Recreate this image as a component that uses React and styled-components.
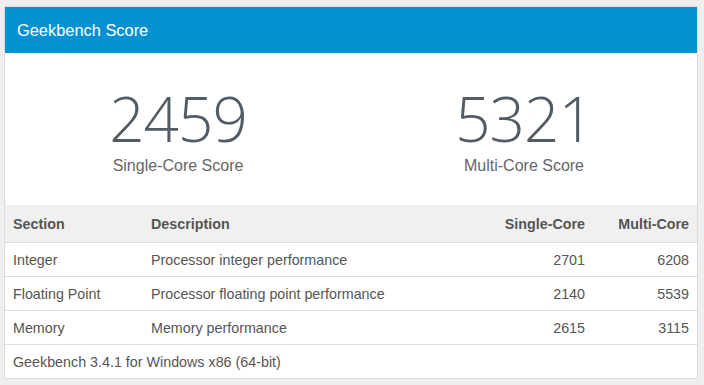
import styled, { createGlobalStyle } from "styled-components";

const GlobalStyle = createGlobalStyle`
  body {
    margin: 0;
    background: #efefef;
    font-family: "Liberation Sans", Arial, sans-serif;
  }
`;

const Card = styled.div`
  margin: 6px 6px 0 4px;
  background: #fff;
  border: 1px solid #dcdcdc;
`;

const Title = styled.div`
  height: 46px;
  padding-left: 12px;
  display: flex;
  align-items: center;
  background: #0591d0;
  color: #fff;
  font-size: 16.4px;
`;

const Scores = styled.div`
  display: grid;
  grid-template-columns: 1fr 1fr;
  height: 152px;
  padding-top: 31px;
  box-sizing: border-box;
`;

const ScoreBox = styled.div`
  display: flex;
  flex-direction: column;
  align-items: center;
`;

const ScoreValue = styled.div`
  font-family: "Open Sans", sans-serif;
  font-weight: 300;
  font-size: 62px;
  line-height: 68px;
  letter-spacing: -1px;
  color: #535b64;
`;

const ScoreLabel = styled.div`
  margin-top: 5px;
  font-size: 16px;
  line-height: 18px;
  color: #666;
`;

const Table = styled.table`
  width: 100%;
  border-collapse: collapse;
  font-size: 14.3px;
  color: #555;
`;

const Th = styled.th`
  height: 37px;
  padding: 0 8px;
  background: #f0f0f0;
  font-weight: bold;
  text-align: ${p => (p.$num ? "right" : "left")};
  width: ${p => p.$w || "auto"};
`;

const Td = styled.td`
  height: 33px;
  padding: 0 8px;
  border-top: 1px solid #dedede;
  text-align: ${p => (p.$num ? "right" : "left")};
`;

const rows = [
  ["Integer", "Processor integer performance", 2701, 6208],
  ["Floating Point", "Processor floating point performance", 2140, 5539],
  ["Memory", "Memory performance", 2615, 3115]
];

const App = () => (
  <>
    <GlobalStyle />
    <Card>
      <Title>Geekbench Score</Title>
      <Scores>
        <ScoreBox>
          <ScoreValue>2459</ScoreValue>
          <ScoreLabel>Single-Core Score</ScoreLabel>
        </ScoreBox>
        <ScoreBox>
          <ScoreValue>5321</ScoreValue>
          <ScoreLabel>Multi-Core Score</ScoreLabel>
        </ScoreBox>
      </Scores>
      <Table>
        <thead>
          <tr>
            <Th $w="122px">Section</Th>
            <Th>Description</Th>
            <Th $num $w="110px">Single-Core</Th>
            <Th $num $w="88px">Multi-Core</Th>
          </tr>
        </thead>
        <tbody>
          {rows.map(([section, desc, single, multi]) => (
            <tr key={section}>
              <Td>{section}</Td>
              <Td>{desc}</Td>
              <Td $num>{single}</Td>
              <Td $num>{multi}</Td>
            </tr>
          ))}
          <tr>
            <Td colSpan={4}>Geekbench 3.4.1 for Windows x86 (64-bit)</Td>
          </tr>
        </tbody>
      </Table>
    </Card>
  </>
);

export default App;
